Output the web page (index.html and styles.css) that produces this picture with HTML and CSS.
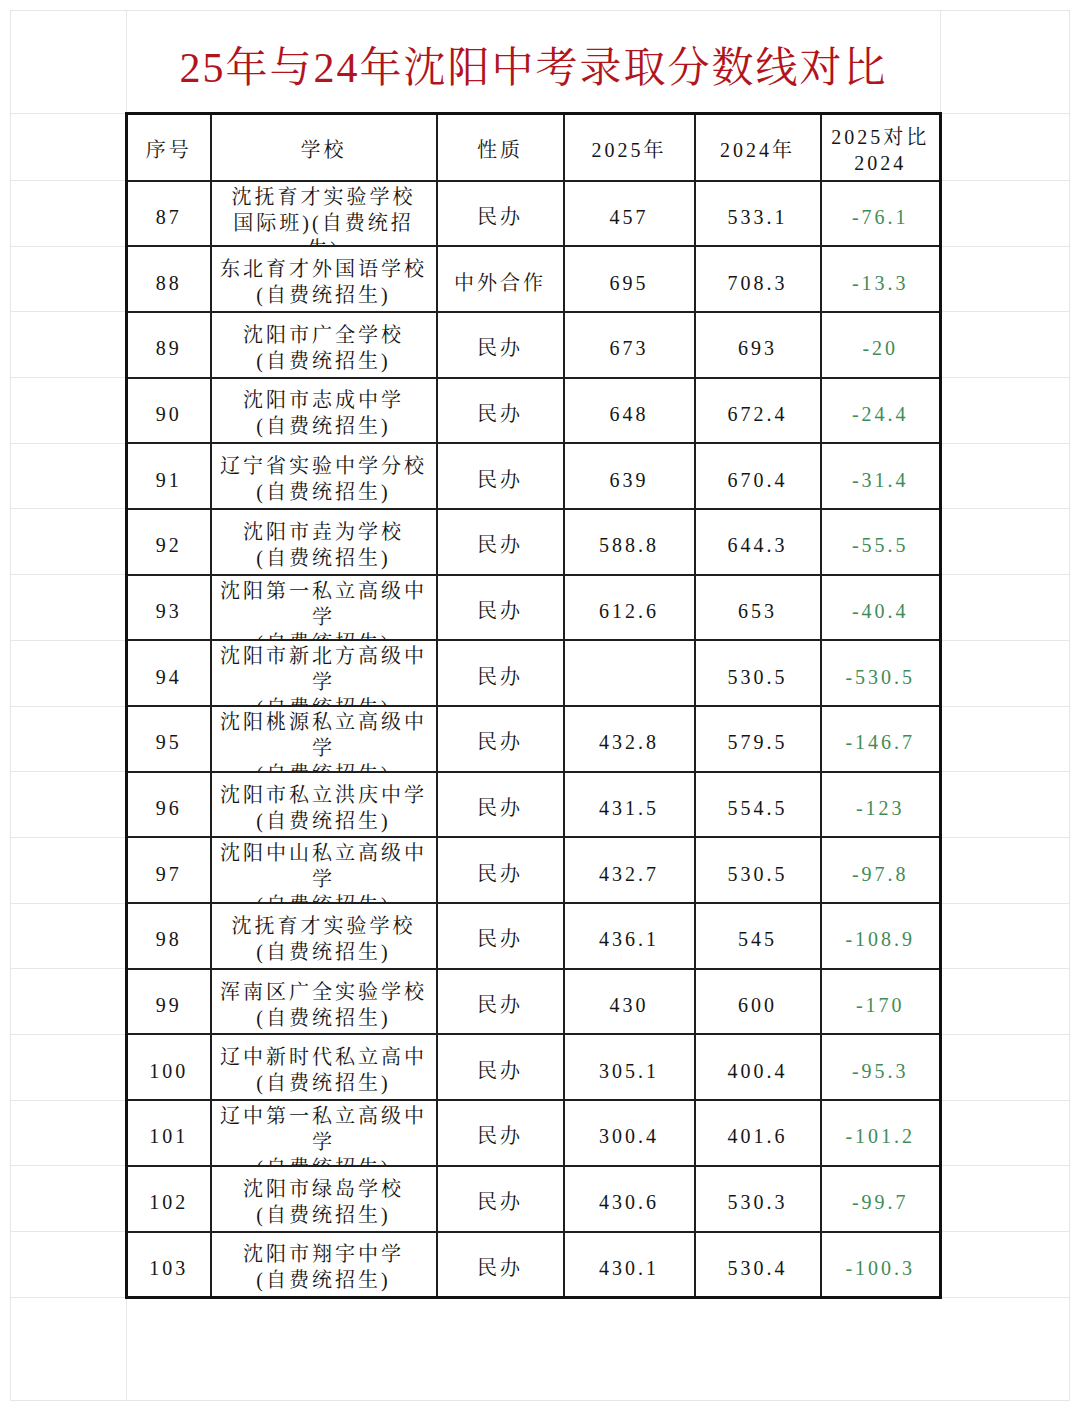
FILE: index.html
```html
<!DOCTYPE html>
<html lang="zh-CN">
<head>
<meta charset="utf-8">
<title>25年与24年沈阳中考录取分数线对比</title>
<link rel="stylesheet" href="styles.css">
</head>
<body>
<table class="sheet">
  <colgroup>
    <col class="c-side-l">
    <col class="c-no">
    <col class="c-school">
    <col class="c-type">
    <col class="c-y25">
    <col class="c-y24">
    <col class="c-diff">
    <col class="c-side-r">
  </colgroup>
  <tr class="r-title">
    <td class="side"></td>
    <td class="title" colspan="6">25年与24年沈阳中考录取分数线对比</td>
    <td class="side"></td>
  </tr>
  <tr class="r-head">
    <td class="side"></td>
    <th class="cell first top-row">序号</th>
    <th class="cell top-row">学校</th>
    <th class="cell top-row">性质</th>
    <th class="cell top-row">2025年</th>
    <th class="cell top-row">2024年</th>
    <th class="cell last top-row">2025对比<br>2024</th>
    <td class="side"></td>
  </tr>
  <tr class="r-data">
    <td class="side"></td>
    <td class="cell first">87</td>
    <td class="cell school"><div class="clip clip-top">沈抚育才实验学校<br>国际班)(自费统招<br>生)</div></td>
    <td class="cell">民办</td>
    <td class="cell">457</td>
    <td class="cell">533.1</td>
    <td class="cell last diff">-76.1</td>
    <td class="side"></td>
  </tr>
  <tr class="r-data">
    <td class="side"></td>
    <td class="cell first">88</td>
    <td class="cell school"><div class="clip">东北育才外国语学校<br>(自费统招生)</div></td>
    <td class="cell">中外合作</td>
    <td class="cell">695</td>
    <td class="cell">708.3</td>
    <td class="cell last diff">-13.3</td>
    <td class="side"></td>
  </tr>
  <tr class="r-data">
    <td class="side"></td>
    <td class="cell first">89</td>
    <td class="cell school"><div class="clip">沈阳市广全学校<br>(自费统招生)</div></td>
    <td class="cell">民办</td>
    <td class="cell">673</td>
    <td class="cell">693</td>
    <td class="cell last diff">-20</td>
    <td class="side"></td>
  </tr>
  <tr class="r-data">
    <td class="side"></td>
    <td class="cell first">90</td>
    <td class="cell school"><div class="clip">沈阳市志成中学<br>(自费统招生)</div></td>
    <td class="cell">民办</td>
    <td class="cell">648</td>
    <td class="cell">672.4</td>
    <td class="cell last diff">-24.4</td>
    <td class="side"></td>
  </tr>
  <tr class="r-data">
    <td class="side"></td>
    <td class="cell first">91</td>
    <td class="cell school"><div class="clip">辽宁省实验中学分校<br>(自费统招生)</div></td>
    <td class="cell">民办</td>
    <td class="cell">639</td>
    <td class="cell">670.4</td>
    <td class="cell last diff">-31.4</td>
    <td class="side"></td>
  </tr>
  <tr class="r-data">
    <td class="side"></td>
    <td class="cell first">92</td>
    <td class="cell school"><div class="clip">沈阳市垚为学校<br>(自费统招生)</div></td>
    <td class="cell">民办</td>
    <td class="cell">588.8</td>
    <td class="cell">644.3</td>
    <td class="cell last diff">-55.5</td>
    <td class="side"></td>
  </tr>
  <tr class="r-data">
    <td class="side"></td>
    <td class="cell first">93</td>
    <td class="cell school"><div class="clip clip-top">沈阳第一私立高级中<br>学<br>(自费统招生)</div></td>
    <td class="cell">民办</td>
    <td class="cell">612.6</td>
    <td class="cell">653</td>
    <td class="cell last diff">-40.4</td>
    <td class="side"></td>
  </tr>
  <tr class="r-data">
    <td class="side"></td>
    <td class="cell first">94</td>
    <td class="cell school"><div class="clip clip-top">沈阳市新北方高级中<br>学<br>(自费统招生)</div></td>
    <td class="cell">民办</td>
    <td class="cell"></td>
    <td class="cell">530.5</td>
    <td class="cell last diff">-530.5</td>
    <td class="side"></td>
  </tr>
  <tr class="r-data">
    <td class="side"></td>
    <td class="cell first">95</td>
    <td class="cell school"><div class="clip clip-top">沈阳桃源私立高级中<br>学<br>(自费统招生)</div></td>
    <td class="cell">民办</td>
    <td class="cell">432.8</td>
    <td class="cell">579.5</td>
    <td class="cell last diff">-146.7</td>
    <td class="side"></td>
  </tr>
  <tr class="r-data">
    <td class="side"></td>
    <td class="cell first">96</td>
    <td class="cell school"><div class="clip">沈阳市私立洪庆中学<br>(自费统招生)</div></td>
    <td class="cell">民办</td>
    <td class="cell">431.5</td>
    <td class="cell">554.5</td>
    <td class="cell last diff">-123</td>
    <td class="side"></td>
  </tr>
  <tr class="r-data">
    <td class="side"></td>
    <td class="cell first">97</td>
    <td class="cell school"><div class="clip clip-top">沈阳中山私立高级中<br>学<br>(自费统招生)</div></td>
    <td class="cell">民办</td>
    <td class="cell">432.7</td>
    <td class="cell">530.5</td>
    <td class="cell last diff">-97.8</td>
    <td class="side"></td>
  </tr>
  <tr class="r-data">
    <td class="side"></td>
    <td class="cell first">98</td>
    <td class="cell school"><div class="clip">沈抚育才实验学校<br>(自费统招生)</div></td>
    <td class="cell">民办</td>
    <td class="cell">436.1</td>
    <td class="cell">545</td>
    <td class="cell last diff">-108.9</td>
    <td class="side"></td>
  </tr>
  <tr class="r-data">
    <td class="side"></td>
    <td class="cell first">99</td>
    <td class="cell school"><div class="clip">浑南区广全实验学校<br>(自费统招生)</div></td>
    <td class="cell">民办</td>
    <td class="cell">430</td>
    <td class="cell">600</td>
    <td class="cell last diff">-170</td>
    <td class="side"></td>
  </tr>
  <tr class="r-data">
    <td class="side"></td>
    <td class="cell first">100</td>
    <td class="cell school"><div class="clip">辽中新时代私立高中<br>(自费统招生)</div></td>
    <td class="cell">民办</td>
    <td class="cell">305.1</td>
    <td class="cell">400.4</td>
    <td class="cell last diff">-95.3</td>
    <td class="side"></td>
  </tr>
  <tr class="r-data">
    <td class="side"></td>
    <td class="cell first">101</td>
    <td class="cell school"><div class="clip clip-top">辽中第一私立高级中<br>学<br>(自费统招生)</div></td>
    <td class="cell">民办</td>
    <td class="cell">300.4</td>
    <td class="cell">401.6</td>
    <td class="cell last diff">-101.2</td>
    <td class="side"></td>
  </tr>
  <tr class="r-data">
    <td class="side"></td>
    <td class="cell first">102</td>
    <td class="cell school"><div class="clip">沈阳市绿岛学校<br>(自费统招生)</div></td>
    <td class="cell">民办</td>
    <td class="cell">430.6</td>
    <td class="cell">530.3</td>
    <td class="cell last diff">-99.7</td>
    <td class="side"></td>
  </tr>
  <tr class="r-data">
    <td class="side"></td>
    <td class="cell first bottom-row">103</td>
    <td class="cell school bottom-row"><div class="clip">沈阳市翔宇中学<br>(自费统招生)</div></td>
    <td class="cell bottom-row">民办</td>
    <td class="cell bottom-row">430.1</td>
    <td class="cell bottom-row">530.4</td>
    <td class="cell last diff bottom-row">-100.3</td>
    <td class="side"></td>
  </tr>
  <tr class="r-blank">
    <td class="side"></td>
    <td class="side" colspan="7"></td>
  </tr>
</table>
</body>
</html>
```

FILE: styles.css
```css
html, body {
  margin: 0;
  padding: 0;
  background: #ffffff;
}

body {
  padding: 10px 0 0 10px;
  font-family: "Liberation Serif", "Noto Serif CJK SC", "Noto Sans CJK SC", serif;
  color: #151515;
}

.sheet {
  border-collapse: collapse;
  table-layout: fixed;
  width: 1059px;
}

.c-side-l { width: 116px; }
.c-no { width: 84px; }
.c-school { width: 226px; }
.c-type { width: 127px; }
.c-y25 { width: 131px; }
.c-y24 { width: 126px; }
.c-diff { width: 120px; }
.c-side-r { width: 129px; }

.r-title { height: 103px; }
.r-head { height: 67px; }
.r-data { height: 63.7px; }
.r-blank { height: 103px; }

.side {
  border: 1px solid #e6e6e6;
  padding: 0;
}

.title {
  border: 1px solid #e6e6e6;
  padding: 4px 0 0 0;
  text-align: center;
  vertical-align: middle;
  font-size: 42px;
  font-weight: normal;
  letter-spacing: 2px;
  color: #b1141c;
  white-space: nowrap;
}

.cell {
  border: 2px solid #1e1e1e;
  padding: 7px 0 0 0;
  text-align: center;
  vertical-align: middle;
  font-size: 20px;
  font-weight: normal;
  line-height: 26px;
  letter-spacing: 3px;
  white-space: nowrap;
}

th.cell {
  padding-top: 6px;
}

.cell.first { border-left: 3px solid #111111; }
.cell.last { border-right: 3px solid #111111; }
.cell.top-row { border-top: 3px solid #111111; }
.cell.bottom-row { border-bottom: 3px solid #111111; }

.diff {
  color: #3f8c58;
}

.cell.school {
  padding: 0;
}

.clip {
  box-sizing: border-box;
  height: 63.7px;
  padding-top: 6px;
  overflow: hidden;
  display: flex;
  flex-direction: column;
  justify-content: center;
  align-items: center;
}

.clip-top {
  justify-content: flex-start;
  padding-top: 2px;
}
```
